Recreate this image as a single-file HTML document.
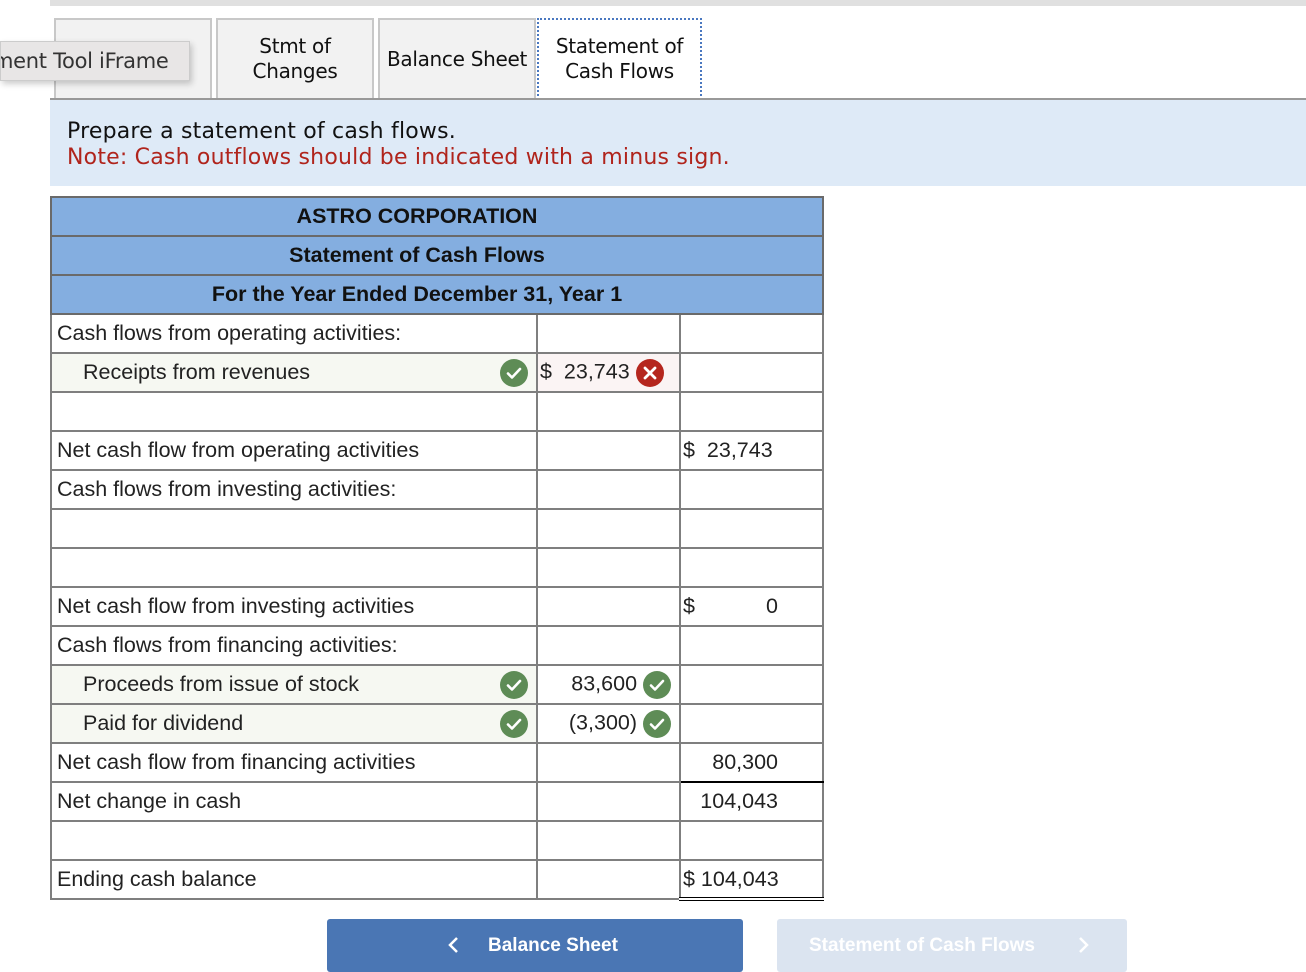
<!DOCTYPE html>
<html><head><meta charset="utf-8"><style>
body{margin:0;width:1306px;height:972px;position:relative;background:#fff;font-family:"Liberation Sans",sans-serif;color:#222;overflow:hidden}
.a{position:absolute}
.tab{position:absolute;top:18px;height:80px;background:#f2f2f2;border:2px solid #c8c8c8;border-bottom:none;box-sizing:border-box;font-family:"DejaVu Sans",sans-serif;font-size:20px;text-align:center;display:flex;align-items:center;justify-content:center;line-height:25px;color:#111;letter-spacing:-0.3px}
table{position:absolute;left:50px;top:196px;border-collapse:collapse;table-layout:fixed;font-size:21.5px}
td{border:2px solid #7f7f7f;height:37px;padding:0 5px;white-space:nowrap;box-sizing:border-box}
tr{height:39px}
.h td{background:#84aee0;text-align:center;font-weight:bold;color:#111;border-color:#6a6a6a;padding-right:45px}
.g{background:#f6f8f2}
.p{background:#fbf4f4}
.ind{padding-left:31px}
.ck{display:inline-block;width:28px;height:28px;vertical-align:middle}
.r{text-align:right}
</style></head><body>
<svg width="0" height="0" style="position:absolute"><defs>
<symbol id="ok" viewBox="0 0 28 28"><circle cx="14" cy="14" r="14" fill="#5e8c56"/><path d="M8 14.5l4 4 8-8.5" stroke="#fff" stroke-width="2.6" fill="none" stroke-linecap="round" stroke-linejoin="round"/></symbol>
<symbol id="no" viewBox="0 0 28 28"><circle cx="14" cy="14" r="14" fill="#b5261e"/><path d="M9 9l10 10M19 9L9 19" stroke="#fff" stroke-width="2.8" stroke-linecap="round"/></symbol>
</defs></svg>
<div class="a" style="left:50px;top:0;width:1256px;height:6px;background:#e0e0e0"></div>
<div class="tab" style="left:54px;width:158px"></div>
<div class="tab" style="left:216px;width:158px">Stmt of<br>Changes</div>
<div class="tab" style="left:378px;width:158px">Balance Sheet</div>
<div class="tab" style="left:537px;width:165px;background:#fff;border:2px dotted #4a78c0;height:82px">Statement of<br>Cash Flows</div>
<div class="a" style="left:50px;top:98px;width:1256px;height:2px;background:#999"></div>
<div class="a" style="left:0;top:41px;width:188px;height:38px;background:#e8e6e6;border:1px solid #ccc;box-shadow:2px 3px 6px rgba(0,0,0,.2);font-size:21px;line-height:38px;font-family:'DejaVu Sans',sans-serif;color:#333;overflow:hidden;white-space:nowrap;text-indent:-8px;letter-spacing:-0.3px">ment Tool iFrame</div>
<div class="a" style="left:50px;top:100px;width:1256px;height:86px;background:#deeaf7"></div>
<div class="a" style="left:67px;top:119px;font-family:'DejaVu Sans',sans-serif;font-size:22px;line-height:26px;color:#111;letter-spacing:0.2px">Prepare a statement of cash flows.<br><span style="color:#b0241c">Note: Cash outflows should be indicated with a minus sign.</span></div>
<table>
<colgroup><col style="width:486px"><col style="width:143px"><col style="width:143px"></colgroup>
<tr class="h"><td colspan="3">ASTRO CORPORATION</td></tr>
<tr class="h"><td colspan="3">Statement of Cash Flows</td></tr>
<tr class="h"><td colspan="3">For the Year Ended December 31, Year 1</td></tr>
<tr><td>Cash flows from operating activities:</td><td></td><td></td></tr>
<tr><td class="g ind" style="position:relative">Receipts from revenues<svg class="ck" style="position:absolute;right:8px;top:5px"><use href="#ok"/></svg></td><td class="p" style="padding:0 0 0 2px">$&nbsp;&nbsp;23,743 <svg class="ck"><use href="#no"/></svg></td><td></td></tr>
<tr><td></td><td></td><td></td></tr>
<tr><td>Net cash flow from operating activities</td><td style="border-top:2px solid #000"></td><td style="padding-left:2px">$&nbsp;&nbsp;23,743</td></tr>
<tr><td>Cash flows from investing activities:</td><td></td><td></td></tr>
<tr><td></td><td></td><td></td></tr>
<tr><td></td><td></td><td></td></tr>
<tr><td>Net cash flow from investing activities</td><td style="border-top:2px solid #000"></td><td style="padding:0 44px 0 2px">$<span style="float:right">0</span></td></tr>
<tr><td>Cash flows from financing activities:</td><td></td><td></td></tr>
<tr><td class="g ind" style="position:relative">Proceeds from issue of stock<svg class="ck" style="position:absolute;right:8px;top:5px"><use href="#ok"/></svg></td><td class="r" style="padding-right:8px">83,600 <svg class="ck"><use href="#ok"/></svg></td><td></td></tr>
<tr><td class="g ind" style="position:relative">Paid for dividend<svg class="ck" style="position:absolute;right:8px;top:5px"><use href="#ok"/></svg></td><td class="r" style="padding-right:8px">(3,300) <svg class="ck"><use href="#ok"/></svg></td><td></td></tr>
<tr><td>Net cash flow from financing activities</td><td></td><td class="r" style="padding-right:44px;border-bottom:2px solid #000">80,300</td></tr>
<tr><td>Net change in cash</td><td></td><td class="r" style="padding-right:44px">104,043</td></tr>
<tr><td></td><td></td><td></td></tr>
<tr><td>Ending cash balance</td><td></td><td style="padding-left:2px;border-top:2px solid #000;border-bottom:4px double #000">$ 104,043</td></tr>
</table>
<div class="a" style="left:327px;top:919px;width:416px;height:53px;background:#4a76b4;border-radius:3px;color:#fff;font-weight:bold;font-size:19px;line-height:53px"><svg class="a" style="left:120px;top:17px" width="14" height="18"><path d="M10 2L3 9l7 7" stroke="#fff" stroke-width="2.5" fill="none"/></svg><span style="position:absolute;left:161px">Balance Sheet</span></div>
<div class="a" style="left:777px;top:919px;width:350px;height:53px;background:#dbe4f0;border-radius:3px;color:#fff;font-weight:bold;font-size:19px;line-height:53px"><span style="position:absolute;left:32px">Statement of Cash Flows</span><svg class="a" style="left:300px;top:17px" width="14" height="18"><path d="M3 2l7 7-7 7" stroke="#fff" stroke-width="2.5" fill="none"/></svg></div>
</body></html>
